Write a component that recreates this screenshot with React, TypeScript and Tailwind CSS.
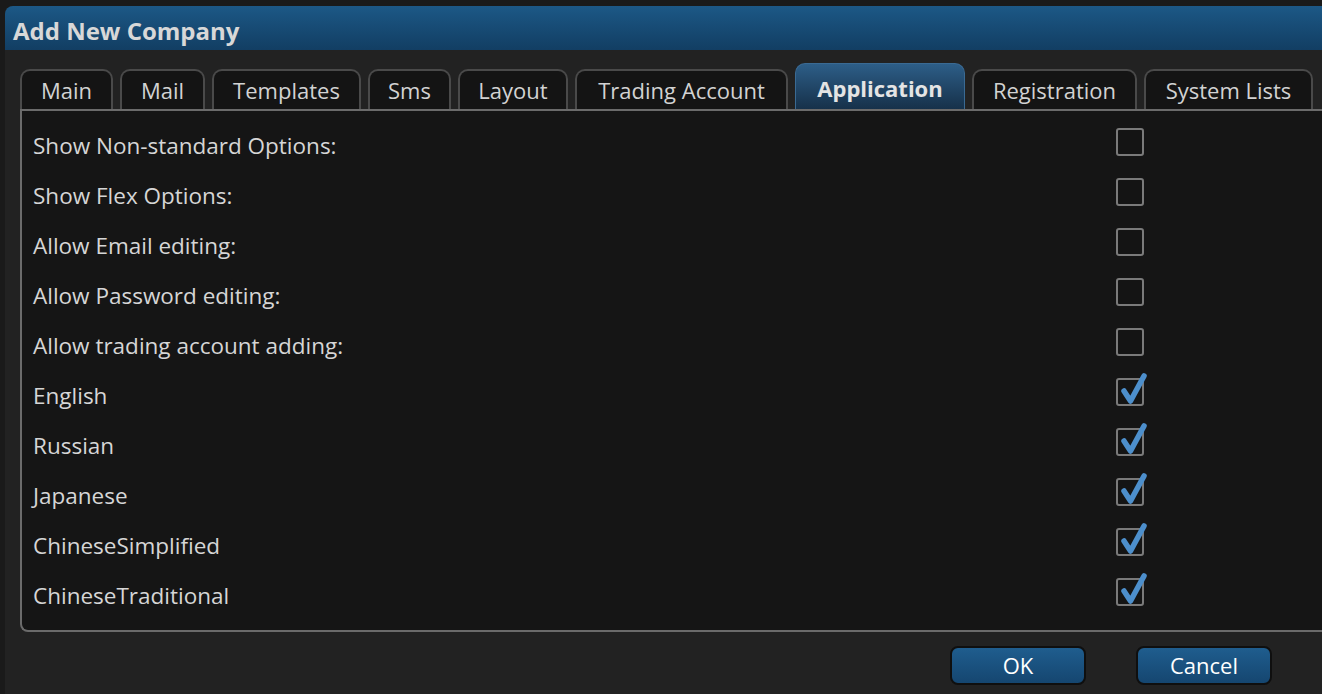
const tabs = [
  { name: "Main", w: "w-[93px]" },
  { name: "Mail", w: "w-[85px]" },
  { name: "Templates", w: "w-[149px]" },
  { name: "Sms", w: "w-[83px]" },
  { name: "Layout", w: "w-[110px]" },
  { name: "Trading Account", w: "w-[213px]" },
  { name: "Application", w: "w-[170px]", active: true },
  { name: "Registration", w: "w-[165px]" },
  { name: "System Lists", w: "w-[169px]" },
];

const rows = [
  { label: "Show Non-standard Options:", checked: false },
  { label: "Show Flex Options:", checked: false },
  { label: "Allow Email editing:", checked: false },
  { label: "Allow Password editing:", checked: false },
  { label: "Allow trading account adding:", checked: false },
  { label: "English", checked: true },
  { label: "Russian", checked: true },
  { label: "Japanese", checked: true },
  { label: "ChineseSimplified", checked: true },
  { label: "ChineseTraditional", checked: true },
];

function CheckBox({ checked }: { checked: boolean }) {
  return (
    <div className="relative w-[28px] h-[28px] rounded-[3px] border-2 border-[#7a7a7a] bg-[#141414]">
      {checked && (
        <svg className="absolute left-[2px] -top-[8px]" width="28" height="34" viewBox="0 0 28 34">
          <path d="M4 19 L10.5 29 L24 4" fill="none" stroke="#4d8fcc" strokeWidth="5.5" strokeLinejoin="round" strokeLinecap="round" />
        </svg>
      )}
    </div>
  );
}

export default function App() {
  return (
    <div className="w-[1322px] h-[694px] overflow-hidden bg-[#1a1a1a] pl-[5px] pt-[6px]" style={{ fontFamily: '"Open Sans", "Noto Sans", sans-serif' }}>
      <div className="w-[1330px] h-[700px] bg-[#222222] rounded-tl-[8px] overflow-hidden">
        <div className="h-[44px] bg-gradient-to-b from-[#1c5886] to-[#123e63] flex items-center pl-[8px] pt-[5px]">
          <span className="text-[24px] font-bold text-[#d8d8d8]">Add New Company</span>
        </div>

        <div className="flex items-end gap-[7px] pl-[15px] pt-[14px] h-[59px]">
          {tabs.map((t) =>
            t.active ? (
              <div
                key={t.name}
                className={`${t.w} h-[46px] rounded-t-[10px] border border-b-0 border-[#3a6a93] bg-gradient-to-b from-[#2d5e88] to-[#16314a] flex items-center justify-center pt-[4px] text-[22px] font-bold text-[#e4e4e4]`}
              >
                {t.name}
              </div>
            ) : (
              <div
                key={t.name}
                className={`${t.w} h-[40px] rounded-t-[10px] border-2 border-b-0 border-[#4a4a4a] bg-[#141414] flex items-center justify-center text-[22px] text-[#d2d2d2]`}
              >
                {t.name}
              </div>
            )
          )}
        </div>

        <div className="ml-[15px] h-[523px] border-2 border-r-0 border-[#6b6b6b] rounded-bl-[8px] bg-[#151515] pt-[7px] pl-[11px]">
          {rows.map((r) => (
            <div key={r.label} className="h-[50px] flex items-center">
              <span className="w-[1083px] text-[22.5px] text-[#d6d6d6] pt-[6px]">{r.label}</span>
              <div className="-mt-[2px]">
                <CheckBox checked={r.checked} />
              </div>
            </div>
          ))}
        </div>

        <div className="flex gap-[50px] pl-[945px] pt-[14px]">
          <button className="w-[136px] h-[39px] rounded-[8px] border-2 border-[#0f0f0f] bg-gradient-to-b from-[#1f5d8e] to-[#154670] text-[22px] text-white">
            OK
          </button>
          <button className="w-[136px] h-[39px] rounded-[8px] border-2 border-[#0f0f0f] bg-gradient-to-b from-[#1f5d8e] to-[#154670] text-[22px] text-white">
            Cancel
          </button>
        </div>
      </div>
    </div>
  );
}
